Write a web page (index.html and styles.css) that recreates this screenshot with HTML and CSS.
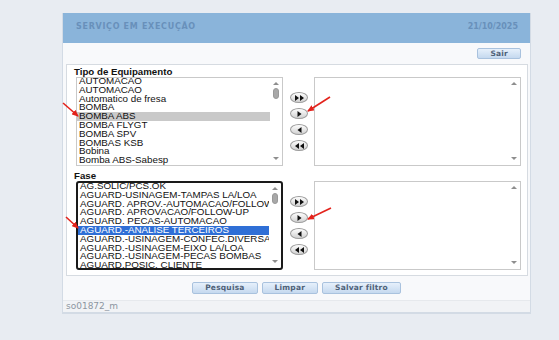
FILE: index.html
```html
<!DOCTYPE html>
<html lang="pt">
<head>
  <meta charset="UTF-8">
  <title>Serviço em Execução</title>
  <link rel="stylesheet" href="styles.css">
</head>
<body>
  <div class="page">
    <div class="panel">
      <div class="panel-head">
        <span class="title">SERVIÇO EM EXECUÇÃO</span>
        <span class="date">21/10/2025</span>
      </div>

      <div class="toolbar">
        <button class="btn">Sair</button>
      </div>

      <div class="filters">
        <div class="group">
          <div class="group-label">Tipo de Equipamento</div>
          <div class="picker">
            <div class="listbox">
              <div class="options">
                <div class="opt">AUTOMACAO</div>
                <div class="opt">AUTOMACAO</div>
                <div class="opt">Automatico de fresa</div>
                <div class="opt">BOMBA</div>
                <div class="opt picked">BOMBA ABS</div>
                <div class="opt">BOMBA FLYGT</div>
                <div class="opt">BOMBA SPV</div>
                <div class="opt">BOMBAS KSB</div>
                <div class="opt">Bobina</div>
                <div class="opt">Bomba ABS-Sabesp</div>
              </div>
              <div class="scroll">
                <span class="arrow up"></span>
                <span class="thumb"></span>
                <span class="arrow down"></span>
              </div>
            </div>
            <div class="movers">
              <button class="mv"><svg width="9" height="6" viewBox="0 0 9 6"><path d="M0 0L4 3L0 6ZM5 0L9 3L5 6Z"/></svg></button>
              <button class="mv"><svg width="5" height="6" viewBox="0 0 5 6"><path d="M0.5 0L4.5 3L0.5 6Z"/></svg></button>
              <button class="mv"><svg width="5" height="6" viewBox="0 0 5 6"><path d="M4.5 0L0.5 3L4.5 6Z"/></svg></button>
              <button class="mv"><svg width="9" height="6" viewBox="0 0 9 6"><path d="M4 0L0 3L4 6ZM9 0L5 3L9 6Z"/></svg></button>
            </div>
            <div class="listbox target">
              <div class="options"></div>
              <div class="scroll">
                <span class="arrow up"></span>
                <span class="arrow down"></span>
              </div>
            </div>
          </div>
        </div>

        <div class="group">
          <div class="group-label">Fase</div>
          <div class="picker">
            <div class="listbox focused">
              <div class="options">
                <div class="opt">AG.SOLIC/PCS.OK</div>
                <div class="opt">AGUARD-USINAGEM-TAMPAS LA/LOA</div>
                <div class="opt">AGUARD. APROV.-AUTOMACAO/FOLLOW-UP</div>
                <div class="opt">AGUARD. APROVACAO/FOLLOW-UP</div>
                <div class="opt">AGUARD. PECAS-AUTOMACAO</div>
                <div class="opt active">AGUARD.-ANALISE TERCEIROS</div>
                <div class="opt">AGUARD.-USINAGEM-CONFEC.DIVERSAS</div>
                <div class="opt">AGUARD.-USINAGEM-EIXO LA/LOA</div>
                <div class="opt">AGUARD.-USINAGEM-PECAS BOMBAS</div>
                <div class="opt">AGUARD.POSIC. CLIENTE</div>
              </div>
              <div class="scroll">
                <span class="arrow up"></span>
                <span class="thumb"></span>
                <span class="arrow down"></span>
              </div>
            </div>
            <div class="movers">
              <button class="mv"><svg width="9" height="6" viewBox="0 0 9 6"><path d="M0 0L4 3L0 6ZM5 0L9 3L5 6Z"/></svg></button>
              <button class="mv"><svg width="5" height="6" viewBox="0 0 5 6"><path d="M0.5 0L4.5 3L0.5 6Z"/></svg></button>
              <button class="mv"><svg width="5" height="6" viewBox="0 0 5 6"><path d="M4.5 0L0.5 3L4.5 6Z"/></svg></button>
              <button class="mv"><svg width="9" height="6" viewBox="0 0 9 6"><path d="M4 0L0 3L4 6ZM9 0L5 3L9 6Z"/></svg></button>
            </div>
            <div class="listbox target">
              <div class="options"></div>
              <div class="scroll">
                <span class="arrow up"></span>
                <span class="arrow down"></span>
              </div>
            </div>
          </div>
        </div>
      </div>

      <div class="actions">
        <button class="btn">Pesquisa</button>
        <button class="btn">Limpar</button>
        <button class="btn">Salvar filtro</button>
      </div>

      <div class="footer">so01872_m</div>
    </div>

    <!-- red annotation arrows drawn over the screenshot -->
    <svg class="marks" width="559" height="340" viewBox="0 0 559 340">
      <defs>
        <marker id="head" markerWidth="7" markerHeight="6" refX="6" refY="3" orient="auto" markerUnits="userSpaceOnUse">
          <path d="M0 0L7 3L0 6Z" fill="#e3231c"/>
        </marker>
      </defs>
      <line x1="63" y1="103" x2="78" y2="116" marker-end="url(#head)"/>
      <line x1="330" y1="97" x2="308" y2="111" marker-end="url(#head)"/>
      <line x1="66" y1="217" x2="78" y2="228" marker-end="url(#head)"/>
      <line x1="331" y1="208" x2="308" y2="219" marker-end="url(#head)"/>
    </svg>
  </div>
</body>
</html>
```

FILE: styles.css
```css
* {
  box-sizing: border-box;
}

body {
  margin: 0;
  background: #e8ecf2;
  font-family: "Liberation Sans", Arial, sans-serif;
}

.page {
  position: relative;
  width: 559px;
  height: 340px;
  padding: 13px 0 0 62px;
}

.panel {
  width: 469px;
  background: #f8f9fb;
  border: 1px solid #d3dbe5;
  border-top: 0;
}

.panel-head {
  height: 30px;
  background: #8ab4da;
  display: flex;
  justify-content: space-between;
  align-items: center;
  padding: 0 12px 4px 13px;
  font-family: "DejaVu Sans", Verdana, sans-serif;
  font-weight: bold;
  font-size: 8px;
  color: #6890ba;
}

.title {
  letter-spacing: 0.7px;
}

.toolbar {
  height: 21px;
  display: flex;
  justify-content: flex-end;
  padding: 5px 9px 0 0;
}

.btn {
  height: 12px;
  padding: 0 12px;
  border: 1px solid #a9c2de;
  border-radius: 2px;
  background: linear-gradient(#e6f0fb, #c5d9ef);
  font-family: "DejaVu Sans", Verdana, sans-serif;
  font-weight: bold;
  font-size: 7.5px;
  line-height: 10px;
  color: #4f6178;
  letter-spacing: 0.2px;
}

.toolbar .btn {
  height: 11px;
  line-height: 9px;
}

.filters {
  margin: 0 2px 0 3px;
  height: 212px;
  background: #fff;
  border: 1px solid #d6dbe1;
  padding: 1px 6px 0 9px;
}

.group-label {
  margin-left: -2px;
  font-weight: bold;
  font-size: 9.7px;
  line-height: 11px;
  color: #111;
}

.group + .group {
  margin-top: 4px;
}

.picker {
  display: flex;
  align-items: center;
}

.listbox {
  width: 207px;
  height: 89px;
  border: 1px solid #c9c9c9;
  background: #fff;
  display: flex;
  overflow: hidden;
}

.listbox.focused {
  border: 2px solid #1a1a1a;
  border-radius: 3px;
}

.options {
  flex: 1;
  min-width: 0;
  overflow: hidden;
  margin-top: -1px;
}

.opt {
  height: 8.8px;
  line-height: 8.8px;
  padding-left: 2px;
  font-size: 9.8px;
  color: #111;
  white-space: nowrap;
}

.opt.picked {
  background: #c9c9c9;
}

.opt.active {
  background: #2f6fd6;
  color: #fff;
}

.scroll {
  width: 12px;
  flex: none;
  display: flex;
  flex-direction: column;
  align-items: center;
  padding: 4px 0 5px;
}

.arrow {
  width: 0;
  height: 0;
  border-left: 3.5px solid transparent;
  border-right: 3.5px solid transparent;
}

.arrow.up {
  border-bottom: 3px solid #8e8e8e;
}

.arrow.down {
  margin-top: auto;
  border-top: 3px solid #8e8e8e;
}

.thumb {
  width: 6px;
  height: 11px;
  margin-top: 3px;
  border-radius: 3px;
  background: #a8a8a8;
  border: 1px solid #999;
}

.movers {
  width: 31px;
  display: flex;
  flex-direction: column;
  align-items: center;
  gap: 5px;
  padding-left: 1px;
}

.mv {
  width: 18px;
  height: 11px;
  padding: 0;
  border: 1px solid #9c9c9c;
  border-radius: 50%;
  background: linear-gradient(#fdfdfd, #d2d2d2);
  display: flex;
  align-items: center;
  justify-content: center;
}

.mv svg {
  fill: #111;
  display: block;
}

.actions {
  display: flex;
  justify-content: center;
  gap: 4px;
  padding: 6px 0 6px;
}

.footer {
  height: 13px;
  border-top: 1px solid #e6e9ed;
  border-bottom: 1px solid #d3dbe5;
  background: #f1f3f6;
  padding-left: 3px;
  font-family: "DejaVu Sans", Verdana, sans-serif;
  font-size: 9px;
  line-height: 11px;
  color: #8d96a1;
}

.marks {
  position: absolute;
  left: 0;
  top: 0;
  pointer-events: none;
}

.marks line {
  stroke: #e3231c;
  stroke-width: 1.6;
}
```
